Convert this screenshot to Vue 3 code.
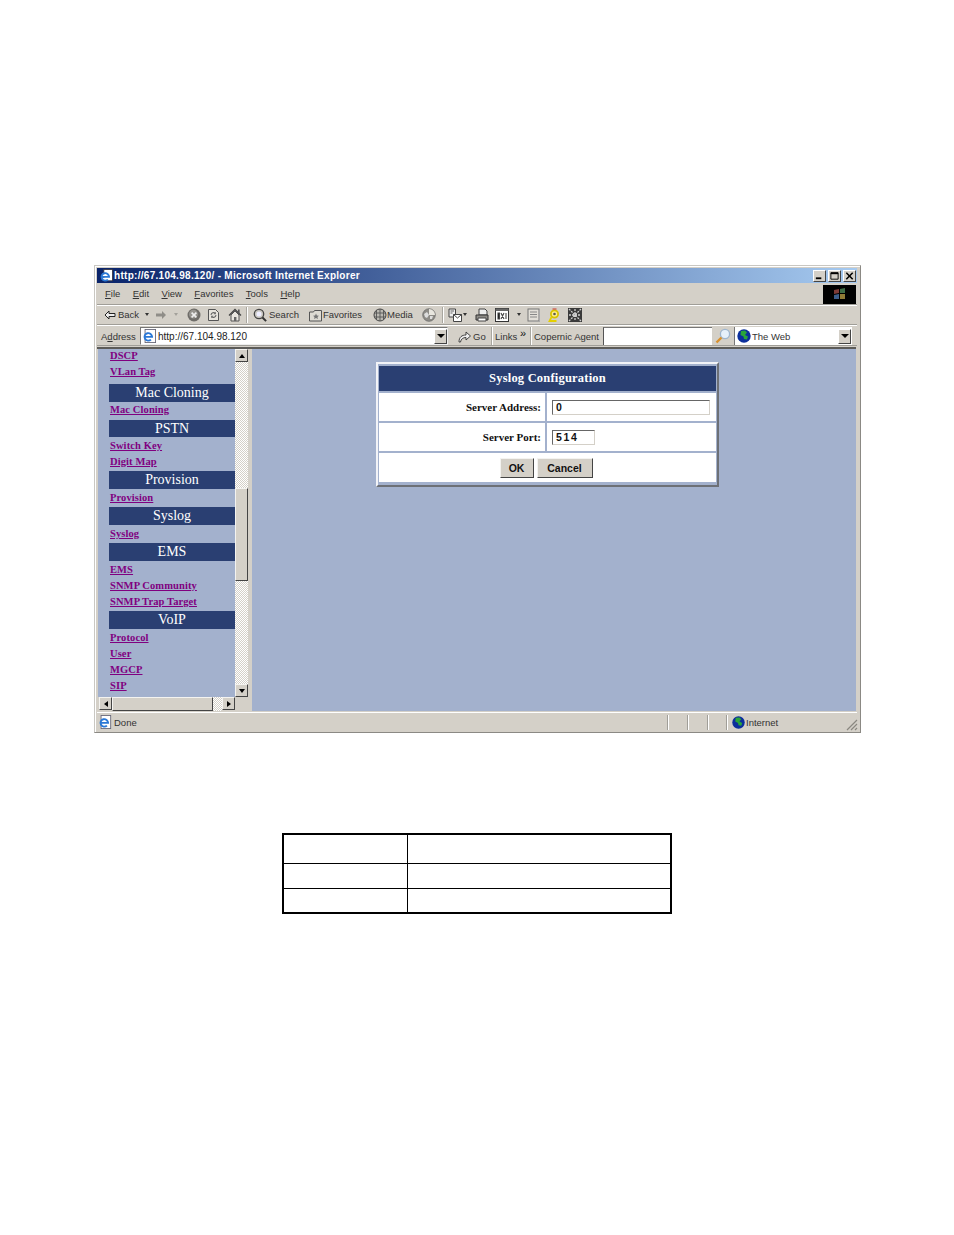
<script setup>
const menus = [
  { key: 'F', rest: 'ile' },
  { key: 'E', rest: 'dit' },
  { key: 'V', rest: 'iew' },
  { key: 'F', rest: 'avorites' },
  { key: 'T', rest: 'ools' },
  { key: 'H', rest: 'elp' }
]

const nav = [
  { label: 'DSCP' },
  { label: 'VLan Tag' },
  { label: 'Mac Cloning', head: true, cls: 'h-first' },
  { label: 'Mac Cloning' },
  { label: 'PSTN', head: true, cls: 'h-short' },
  { label: 'Switch Key' },
  { label: 'Digit Map' },
  { label: 'Provision', head: true },
  { label: 'Provision' },
  { label: 'Syslog', head: true },
  { label: 'Syslog' },
  { label: 'EMS', head: true },
  { label: 'EMS' },
  { label: 'SNMP Community' },
  { label: 'SNMP Trap Target' },
  { label: 'VoIP', head: true },
  { label: 'Protocol' },
  { label: 'User' },
  { label: 'MGCP' },
  { label: 'SIP' }
]
</script>

<template>
  <div class="page">
    <div class="window">
      <div class="titlebar">
        <svg class="ie-small" viewBox="0 0 16 16">
          <rect x="5.500" y=".5" width="10" height="13" fill="#fff" stroke="#334" />
          <path d="M3 9h8.500a4.300 4.300 0 1 0-1.300 3.100" fill="#fff" stroke="#2a78d6" stroke-width="2.200" />
        </svg>
        <span class="title-text">http://67.104.98.120/ - Microsoft Internet Explorer</span>
        <div class="caption-btns">
          <span class="cap"><svg viewBox="0 0 12 11"><rect x="2" y="7" width="6" height="2" fill="#000" /></svg></span>
          <span class="cap"><svg viewBox="0 0 12 11"><path d="M2 2h8v7H2z" fill="none" stroke="#000" /><rect x="2" y="1.5" width="8" height="2" fill="#000" /></svg></span>
          <span class="cap"><svg viewBox="0 0 12 11"><path d="M2.5 2l7 7M9.5 2l-7 7" stroke="#000" stroke-width="1.7" /></svg></span>
        </div>
      </div>

      <div class="menubar">
        <div class="menus">
          <span v-for="m in menus" :key="m.rest"><u>{{ m.key }}</u>{{ m.rest }}</span>
        </div>
        <div class="winlogo">
          <svg viewBox="0 0 18 14">
            <path d="M3 3l5-1v4l-5 1z" fill="#7d3a36" />
            <path d="M9 2l5-1v5l-5 0z" fill="#3d6b45" />
            <path d="M3 8l5-1v5l-5 0z" fill="#3b5c8a" />
            <path d="M9 7l5 0v5l-5 0z" fill="#8f7a35" />
          </svg>
        </div>
      </div>

      <div class="toolbar">
        <svg class="t-back" viewBox="0 0 12 12"><path d="M1 6l4-4v2.5h6v3H5V10z" fill="#eee" stroke="#222" /></svg>
        <span class="t-label t-back-text">Back</span>
        <span class="caret t-c1"></span>
        <svg class="t-fwd" viewBox="0 0 12 12"><path d="M11 6L7 2v2.5H1v3h6V10z" fill="#8f8d88" /></svg>
        <span class="caret caret-off t-c2"></span>
        <svg class="t-stop" viewBox="0 0 14 14"><circle cx="7" cy="7" r="6.5" fill="#6f6d69" /><circle cx="6.4" cy="6.2" r="4.4" fill="#979590" /><path d="M4.6 4.6l4.8 4.8M9.4 4.6L4.6 9.4" stroke="#eee" stroke-width="1.6" /></svg>
        <svg class="t-refresh" viewBox="0 0 13 14"><path d="M1.5 1.5h7l3 3v8h-10z" fill="#e6e3dc" stroke="#555" /><path d="M4 7a2.6 2.6 0 0 1 4.4-1.6M9 7a2.6 2.6 0 0 1-4.4 1.6" fill="none" stroke="#666" stroke-width="1.1" /><path d="M8.8 3.8v2.4H6.6zM4.2 10.2V7.8h2.2z" fill="#666" /></svg>
        <svg class="t-home" viewBox="0 0 14 14"><path d="M1 7.5L7 1.5l6 6" fill="none" stroke="#444" stroke-width="1.3" /><path d="M3 7v6h8V7L7 3z" fill="#e9e6df" stroke="#555" /><rect x="6" y="9" width="2.4" height="4" fill="#666" /><rect x="10" y="1.5" width="1.6" height="3.5" fill="#555" /></svg>
        <span class="t-sep t-s1"></span>
        <svg class="t-search" viewBox="0 0 14 14"><circle cx="6" cy="6" r="4.7" fill="#c9c7c0" stroke="#444" stroke-width="1.3" /><circle cx="6" cy="6" r="2.5" fill="#eef" /><path d="M9.5 9.5l3.6 3.6" stroke="#333" stroke-width="2" /></svg>
        <span class="t-label t-search-text">Search</span>
        <svg class="t-fav" viewBox="0 0 13 13"><path d="M.5 3.5h4l1-1.5h7v10.500h-12z" fill="#dedbd3" stroke="#555" /><path d="M7 5l.9 1.9 2.1.3-1.5 1.400.4 2L7 9.600l-1.900 1 .4-2L4 7.200l2.100-.3z" fill="#777" /></svg>
        <span class="t-label t-fav-text">Favorites</span>
        <svg class="t-media" viewBox="0 0 14 14"><circle cx="7" cy="7" r="6" fill="#bbb9b2" stroke="#444" /><path d="M3.500 2v10M7 1v12M10.500 2v10M1 5h12M1 9h12" stroke="#555" stroke-width=".9" /></svg>
        <span class="t-label t-media-text">Media</span>
        <svg class="t-hist" viewBox="0 0 14 14"><circle cx="7" cy="7" r="6.300" fill="#8e8c87" stroke="#666" stroke-width=".7" /><path d="M7 1a6 6 0 0 1 6 6H7z" fill="#e8e6df" /><path d="M2 6l3-2 2 3-2 3-2-1zM8 8l3 0-1 3-2 0z" fill="#ddd" /></svg>
        <span class="t-sep t-s2"></span>
        <svg class="t-mail" viewBox="0 0 14 14"><path d="M1 1h6.500v8H1z" fill="#eee" stroke="#444" /><path d="M5.500 6.500h8v7h-8z" fill="#fff" stroke="#444" /><path d="M5.500 6.500l4 3.500 4-3.500" fill="none" stroke="#444" /><path d="M2.500 3h3.500M2.500 5h2" stroke="#666" /></svg>
        <span class="caret t-c3"></span>
        <svg class="t-print" viewBox="0 0 14 14"><path d="M4 1h6l2 2v4H4z" fill="#eee" stroke="#444" /><path d="M1 7h12v5H1z" fill="#8e8c87" stroke="#333" /><path d="M3 10h8v3H3z" fill="#fff" stroke="#444" /></svg>
        <svg class="t-edit" viewBox="0 0 14 14"><rect x=".5" y=".5" width="13" height="13" fill="#fff" stroke="#333" /><rect x=".5" y=".5" width="13" height="2.500" fill="#666" /><path d="M3 5h1.500v6H3zM6 5l3 6M9 5l-3 6M11 5v6" stroke="#444" stroke-width="1.100" /></svg>
        <span class="caret t-c4"></span>
        <svg class="t-disc" viewBox="0 0 13 14"><rect x="1" y="1" width="11" height="12" fill="#e3e0d9" stroke="#777" /><path d="M3 4h7M3 6.500h7M3 9h7" stroke="#888" /><path d="M12.500 2v12H2" fill="none" stroke="#aaa" /></svg>
        <svg class="t-msg" viewBox="0 0 13 14"><circle cx="6.500" cy="6" r="3.600" fill="#fff08a" stroke="#d8c300" stroke-width="1.800" /><path d="M3.500 9L1.500 13h7" fill="none" stroke="#e4cf00" stroke-width="1.800" /><path d="M4.500 1h4" stroke="#c33" /><circle cx="6.500" cy="6" r="1.300" fill="#555" /></svg>
        <svg class="t-last" viewBox="0 0 14 14"><rect width="14" height="14" fill="#3a3a3a" /><path d="M1 1l12 12M13 1L1 13M7 1v12M1 7h12" stroke="#cfcfcf" stroke-width="1.300" stroke-dasharray="2 1" /></svg>
      </div>

      <div class="addressbar">
        <span class="addr-label">A<u>d</u>dress</span>
        <div class="addr-field">
          <svg class="ie-small addr-ie" viewBox="0 0 16 16">
            <rect x="3.500" y=".5" width="12" height="15" fill="#fff" stroke="#667" />
            <path d="M3 9h8.500a4.300 4.300 0 1 0-1.300 3.100" fill="#fff" stroke="#2a78d6" stroke-width="2.200" />
          </svg>
          <span class="addr-text">http://67.104.98.120</span>
          <span class="drop"><i></i></span>
        </div>
        <svg class="go-icon" viewBox="0 0 13 13"><path d="M1 12c0-5 3-7 7-7V2l4.500 4L8 10V7.500c-3 0-5 1.500-5.500 4.500z" fill="#eee" stroke="#333" stroke-width=".9" /></svg>
        <span class="go-text">Go</span>
        <span class="a-sep a-s1"></span>
        <span class="links">Links</span>
        <span class="chev">»</span>
        <span class="a-sep"></span>
        <span class="copernic">Copernic Agent</span>
        <div class="agent-field"></div>
        <svg class="mag" viewBox="0 0 16 16"><circle cx="10" cy="6" r="4.600" fill="#e6f0fb" stroke="#9fb6cf" stroke-width="1.300" /><path d="M6.500 9.500L1.500 14.500" stroke="#d9912e" stroke-width="2.400" /></svg>
        <div class="web-field">
          <svg class="globe" viewBox="0 0 14 14">
            <circle cx="7" cy="7" r="6.700" fill="#0c2f9c" />
            <path d="M4 2l4-.5 2 2-2 2.500 3 1.500-1 3-3-.5-.5-2.500L3.500 6z" fill="#2aa53a" />
          </svg>
          <span class="web-text">The Web</span>
          <span class="drop"><i></i></span>
        </div>
      </div>

      <div class="content">
        <div class="sidebar">
          <div class="side-top">
            <div class="nav">
              <template v-for="(item, i) in nav" :key="i">
                <div v-if="item.head" class="nav-head" :class="item.cls">{{ item.label }}</div>
                <a v-else class="nav-link" href="#">{{ item.label }}</a>
              </template>
            </div>
            <div class="vscroll">
              <span class="sb-btn"><i class="arrow-up"></i></span>
              <span class="track t-upper"></span>
              <span class="thumb-v"></span>
              <span class="track t-lower"></span>
              <span class="sb-btn"><i class="arrow-down"></i></span>
            </div>
          </div>
          <div class="hscroll">
            <span class="sb-btn"><i class="arrow-left"></i></span>
            <span class="thumb-h"></span>
            <span class="track t-h"></span>
            <span class="sb-btn"><i class="arrow-right"></i></span>
          </div>
        </div>
        <div class="main">
          <div class="dialog">
            <div class="dlg-title">Syslog Configuration</div>
            <div class="dlg-key">Server Address:</div>
            <div class="dlg-val"><span class="field field-long">0</span></div>
            <div class="dlg-key">Server Port:</div>
            <div class="dlg-val"><span class="field field-short">514</span></div>
            <div class="dlg-actions">
              <button class="btn btn-ok" type="button">OK</button>
              <button class="btn btn-cancel" type="button">Cancel</button>
            </div>
          </div>
        </div>
      </div>

      <div class="statusbar">
        <svg class="ie-small status-ie" viewBox="0 0 16 16">
          <rect x="3.500" y=".5" width="11" height="15" fill="#fff" stroke="#667" />
          <path d="M3 9h8.500a4.300 4.300 0 1 0-1.300 3.100" fill="#fff" stroke="#2a78d6" stroke-width="2.200" />
        </svg>
        <span class="status-text">Done</span>
        <span class="st-cell st-1"></span>
        <span class="st-cell st-2"></span>
        <span class="st-cell st-3"></span>
        <span class="st-zone">
          <svg class="globe" viewBox="0 0 14 14">
            <circle cx="7" cy="7" r="6.700" fill="#0c2f9c" />
            <path d="M4 2l4-.5 2 2-2 2.500 3 1.500-1 3-3-.5-.5-2.500L3.500 6z" fill="#2aa53a" />
          </svg>
          Internet
        </span>
        <svg class="grip" viewBox="0 0 12 12"><path d="M11 1L1 11M11 5l-6 6M11 9l-2 2" stroke="#8a8880" stroke-width="1.200" /></svg>
      </div>
    </div>

    <div class="sheet">
      <div class="c r1 c1"></div>
      <div class="c r1"></div>
      <div class="c r2 c1"></div>
      <div class="c r2"></div>
      <div class="c r3 c1"></div>
      <div class="c r3"></div>
    </div>
  </div>
</template>

<style>
html,
body {
  background: #fff;
  margin: 0;
}
</style>

<style scoped>
.page {
  box-sizing: border-box;
  height: 1235px;
  padding: 265px 0 0 94px;
  overflow: hidden;
  font-family: "Liberation Sans", Arial, sans-serif;
}

.window {
  box-sizing: border-box;
  width: 767px;
  height: 468px;
  display: flex;
  flex-direction: column;
  background: #d4d0c8;
  border: 1px solid #8b8984;
  border-top-color: #c9c7c2;
  border-left-color: #c9c7c2;
  box-shadow: inset 1px 1px 0 #fff;
  padding: 2px 3px 0 2px;
}

.titlebar {
  height: 15px;
  margin-bottom: 1px;
  flex: none;
  display: flex;
  align-items: center;
  background: linear-gradient(90deg, #0a246a, #a6caf0);
  color: #fff;
}

.ie-small {
  width: 14px;
  height: 14px;
  flex: none;
}

.titlebar .ie-small {
  margin-left: 2px;
}

.title-text {
  margin-left: 1px;
  font-size: 10px;
  font-weight: 700;
  letter-spacing: .29px;
  white-space: nowrap;
}

.caption-btns {
  margin-left: auto;
  margin-right: 1px;
  display: flex;
}

.cap {
  width: 13px;
  height: 12px;
  margin-left: 2px;
  display: block;
  box-sizing: border-box;
  background: #d4d0c8;
  border: 1px solid;
  border-color: #fff #444 #444 #fff;
}

.cap svg {
  display: block;
  width: 11px;
  height: 10px;
}

.menubar {
  height: 20px;
  flex: none;
  display: flex;
  align-items: center;
  justify-content: space-between;
  border-bottom: 1px solid #a09e98;
  box-shadow: 0 1px 0 #fff;
  color: #333;
  font-size: 9.500px;
}

.menus {
  display: flex;
  gap: 12.400px;
  padding-left: 8px;
  padding-bottom: 1px;
}

.winlogo {
  width: 33px;
  height: 19px;
  margin-right: 1px;
  background: #000;
  display: flex;
  align-items: center;
  justify-content: center;
}

.winlogo svg {
  width: 18px;
  height: 14px;
}

.toolbar {
  height: 19px;
  flex: none;
  display: flex;
  align-items: center;
  border-bottom: 1px solid #a09e98;
  box-shadow: 0 1px 0 #fff;
  font-size: 9.500px;
  color: #333;
}

.toolbar svg {
  flex: none;
  height: 14px;
}

.t-label {
  white-space: nowrap;
}

.t-back { width: 12px; margin-left: 7px; }
.t-back-text { margin-left: 2px; width: 20px; }
.caret {
  width: 0;
  height: 0;
  flex: none;
  border-left: 2.500px solid transparent;
  border-right: 2.500px solid transparent;
  border-top: 3px solid #333;
}
.caret-off { border-top-color: #a3a19b; }
.t-c1 { margin-left: 7px; }
.t-fwd { width: 12px; margin-left: 6px; }
.t-c2 { margin-left: 7px; }
.t-stop { width: 14px; margin-left: 9px; }
.t-refresh { width: 13px; margin-left: 6px; }
.t-home { width: 14px; margin-left: 8px; }
.t-sep {
  width: 1px;
  height: 16px;
  flex: none;
  background: #a8a69f;
  box-shadow: 1px 0 0 #fff;
}
.t-s1 { margin-left: 4px; }
.t-search { width: 14px; margin-left: 6px; }
.t-search-text { margin-left: 2px; width: 29px; }
.t-fav { width: 13px; margin-left: 11px; }
.t-fav-text { margin-left: 1px; width: 39px; }
.t-media { width: 14px; margin-left: 11px; }
.t-media-text { margin-left: 0; width: 25px; }
.t-hist { width: 14px; margin-left: 10px; }
.t-s2 { margin-left: 6px; }
.t-mail { width: 14px; margin-left: 5px; }
.t-c3 { margin-left: 1px; }
.t-print { width: 14px; margin-left: 8px; }
.t-edit { width: 14px; margin-left: 6px; }
.t-c4 { margin-left: 8px; }
.t-disc { width: 13px; margin-left: 6px; }
.t-msg { width: 13px; margin-left: 8px; }
.t-last { width: 14px; margin-left: 7px; }

.addressbar {
  height: 18px;
  padding-top: 2px;
  flex: none;
  display: flex;
  align-items: center;
  border-bottom: 1px solid #a09e98;
  font-size: 9.500px;
  color: #333;
}

.addr-label {
  margin-left: 4px;
  width: 39px;
  flex: none;
  font-size: 9.500px;
}

.addr-field {
  width: 308px;
  height: 18px;
  flex: none;
  box-sizing: border-box;
  display: flex;
  align-items: center;
  background: #fff;
  border: 1px solid;
  border-color: #777 #eee #eee #777;
}

.addr-ie {
  margin-left: 1px;
}

.addr-text {
  margin-left: 2px;
  font-size: 10px;
  color: #222;
}

.drop {
  margin-left: auto;
  width: 13px;
  height: 15px;
  flex: none;
  box-sizing: border-box;
  display: flex;
  align-items: center;
  justify-content: center;
  background: #d4d0c8;
  border: 1px solid;
  border-color: #fff #444 #444 #fff;
}

.drop i {
  width: 0;
  height: 0;
  border-left: 4px solid transparent;
  border-right: 4px solid transparent;
  border-top: 4px solid #000;
}

.go-icon {
  width: 13px;
  height: 13px;
  margin-left: 10px;
  flex: none;
}

.go-text {
  margin-left: 2px;
  width: 10px;
  font-size: 9.500px;
}

.a-sep {
  width: 1px;
  height: 18px;
  flex: none;
  background: #a8a69f;
  box-shadow: 1px 0 0 #fff;
}

.a-s1 { margin-left: 8px; }

.links {
  margin-left: 3px;
  width: 25px;
  font-size: 9.500px;
}

.chev {
  width: 10px;
  font-size: 11px;
  line-height: 9px;
  align-self: flex-start;
  margin-top: 2px;
  color: #111;
}

.copernic {
  margin-left: 3px;
  width: 69px;
  white-space: nowrap;
  font-size: 9.500px;
}

.agent-field {
  width: 109px;
  height: 18px;
  flex: none;
  box-sizing: border-box;
  background: #fff;
  border-top: 1px solid #777;
  border-left: 1px solid #555;
}

.mag {
  width: 16px;
  height: 16px;
  margin-left: 3px;
  flex: none;
}

.web-field {
  width: 118px;
  height: 18px;
  margin-left: 3px;
  flex: none;
  box-sizing: border-box;
  display: flex;
  align-items: center;
  padding-right: 1px;
  background: #fff;
  border-left: 1px solid #777;
}

.globe {
  width: 14px;
  height: 14px;
  flex: none;
}

.web-field .globe {
  margin-left: 2px;
}

.web-text {
  margin-left: 1px;
  font-size: 9.500px;
}

.content {
  flex: 1;
  min-height: 0;
  display: flex;
  margin-top: 1px;
  margin-right: 1px;
  border-top: 2px solid #5c5b58;
  background: #a3b1cd;
}

.sidebar {
  width: 150px;
  flex: none;
  display: flex;
  flex-direction: column;
  background: #a3b1cd;
  border-left: 1px solid #d4d0c8;
}

.side-top {
  flex: 1;
  min-height: 0;
  display: flex;
}

.nav {
  flex: 1;
  min-width: 0;
  margin-top: -1px;
  padding-left: 11px;
  overflow: hidden;
}

.nav-link {
  display: block;
  height: 16px;
  padding-left: 1px;
  line-height: 16px;
  font-family: "Liberation Serif", "Times New Roman", serif;
  font-size: 10.500px;
  font-weight: 700;
  letter-spacing: .1px;
  color: #800080;
  text-decoration: underline;
  white-space: nowrap;
}

.nav-head {
  height: 18px;
  margin: 1px 0;
  background: #2a3f72;
  color: #fff;
  text-align: center;
  font-family: "Liberation Serif", "Times New Roman", serif;
  font-size: 14px;
  line-height: 18px;
}

.h-first {
  margin: 4px 0 0;
}

.h-short {
  height: 17px;
  margin: 2px 0 1px;
  line-height: 17px;
}

.vscroll {
  width: 13px;
  flex: none;
  display: flex;
  flex-direction: column;
}

.sb-btn {
  width: 13px;
  height: 13px;
  flex: none;
  box-sizing: border-box;
  display: flex;
  align-items: center;
  justify-content: center;
  background: #d4d0c8;
  border: 1px solid;
  border-color: #f4f3f0 #444 #444 #f4f3f0;
}

.sb-btn i {
  width: 0;
  height: 0;
  display: block;
}

.arrow-up {
  border-left: 3.500px solid transparent;
  border-right: 3.500px solid transparent;
  border-bottom: 4px solid #000;
}

.arrow-down {
  border-left: 3.500px solid transparent;
  border-right: 3.500px solid transparent;
  border-top: 4px solid #000;
}

.arrow-left {
  border-top: 3.500px solid transparent;
  border-bottom: 3.500px solid transparent;
  border-right: 4px solid #000;
}

.arrow-right {
  border-top: 3.500px solid transparent;
  border-bottom: 3.500px solid transparent;
  border-left: 4px solid #000;
}

.track {
  display: block;
  background-color: #fff;
  background-image: repeating-conic-gradient(#d4d0c8 0 25%, #fff 0 50%);
  background-size: 2px 2px;
}

.t-upper {
  height: 126px;
  flex: none;
}

.t-lower {
  flex: 1;
}

.thumb-v {
  height: 93px;
  flex: none;
  box-sizing: border-box;
  background: #d4d0c8;
  border: 1px solid;
  border-color: #f4f3f0 #444 #444 #f4f3f0;
}

.hscroll {
  height: 14px;
  flex: none;
  display: flex;
  padding: 0 13px 0 1px;
  background: #d4d0c8;
}

.thumb-h {
  width: 101px;
  flex: none;
  box-sizing: border-box;
  background: #d4d0c8;
  border: 1px solid;
  border-color: #f4f3f0 #444 #444 #f4f3f0;
}

.t-h {
  flex: 1;
}

.main {
  flex: 1;
  min-width: 0;
  box-sizing: border-box;
  padding: 13px 0 0 124px;
  border-left: 4px solid #d4d0c8;
}

.dialog {
  box-sizing: border-box;
  width: 343px;
  height: 125px;
  display: grid;
  grid-template-columns: 166px 1fr;
  grid-template-rows: 25px 28px 28px 29px;
  gap: 2px;
  padding: 2px 1px 1px;
  background: #a3b1cd;
  border: 2px solid;
  border-color: #f2f3f7 #6d7076 #6d7076 #f2f3f7;
  font-family: "Liberation Serif", "Times New Roman", serif;
}

.dlg-title {
  grid-column: 1 / 3;
  background: #2a3f72;
  color: #fff;
  text-align: center;
  line-height: 25px;
  font-size: 12.500px;
  font-weight: 700;
  letter-spacing: .2px;
}

.dlg-key {
  display: flex;
  align-items: center;
  justify-content: flex-end;
  padding-right: 4px;
  background: #fff;
  font-size: 11px;
  font-weight: 700;
  color: #111;
}

.dlg-val {
  display: flex;
  align-items: center;
  padding-left: 5px;
  background: #fff;
}

.field {
  box-sizing: border-box;
  height: 15px;
  padding-left: 3px;
  border: 1px solid;
  border-color: #666 #d4d0c8 #d4d0c8 #666;
  line-height: 13px;
  font-family: "Liberation Sans", Arial, sans-serif;
  font-size: 10.500px;
  font-weight: 700;
  letter-spacing: 1.700px;
  color: #111;
}

.field-long {
  width: 158px;
}

.field-short {
  width: 43px;
}

.dlg-actions {
  grid-column: 1 / 3;
  display: flex;
  align-items: center;
  justify-content: center;
  gap: 3px;
  padding-right: 3px;
  background: #fff;
}

.btn {
  height: 20px;
  padding: 0;
  box-sizing: border-box;
  background: #d4d0c8;
  border: 1px solid;
  border-color: #f4f3f0 #444 #444 #f4f3f0;
  font-family: "Liberation Sans", Arial, sans-serif;
  font-size: 10.500px;
  font-weight: 700;
  color: #111;
}

.btn-ok {
  width: 34px;
}

.btn-cancel {
  width: 56px;
}

.statusbar {
  height: 18px;
  margin-top: 1px;
  margin-bottom: 1px;
  flex: none;
  display: flex;
  align-items: center;
  font-size: 9.500px;
  color: #333;
  border-top: 1px solid #fff;
}

.status-ie {
  margin-left: 1px;
}

.status-text {
  margin-left: 2px;
  width: 553px;
  flex: none;
}

.st-cell {
  height: 15px;
  flex: none;
  box-sizing: border-box;
  border-left: 1px solid #a09e98;
  box-shadow: inset 1px 0 0 #fff;
}

.st-1 { width: 20px; }
.st-2 { width: 20px; }
.st-3 { width: 19px; }

.st-zone {
  width: 120px;
  height: 15px;
  flex: none;
  box-sizing: border-box;
  display: flex;
  align-items: center;
  gap: 1px;
  padding-left: 5px;
  border-left: 1px solid #a09e98;
  box-shadow: inset 1px 0 0 #fff;
}

.st-zone .globe {
  width: 13px;
  height: 13px;
}

.grip {
  width: 12px;
  height: 12px;
  margin-left: auto;
  flex: none;
  align-self: flex-end;
}

.sheet {
  box-sizing: border-box;
  width: 390px;
  height: 81px;
  margin: 100px 0 0 188px;
  display: grid;
  grid-template-columns: 124px 1fr;
  grid-template-rows: 29px 25px 1fr;
  border: 2px solid #000;
}

.c1 {
  border-right: 1px solid #000;
}

.r1,
.r2 {
  border-bottom: 1px solid #000;
}
</style>
